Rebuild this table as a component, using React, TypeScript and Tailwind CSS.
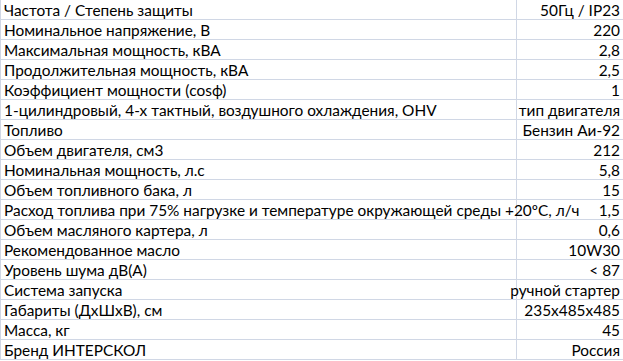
const rows: [string, string][] = [
  ["Частота / Степень защиты", "50Гц / IP23"],
  ["Номинальное напряжение, В", "220"],
  ["Максимальная мощность, кВА", "2,8"],
  ["Продолжительная мощность, кВА", "2,5"],
  ["Коэффициент мощности (cosф)", "1"],
  ["1-цилиндровый, 4-х тактный, воздушного охлаждения, OHV", "тип двигателя"],
  ["Топливо", "Бензин Аи-92"],
  ["Объем двигателя, см3", "212"],
  ["Номинальная мощность, л.с", "5,8"],
  ["Объем топливного бака, л", "15"],
  ["Расход топлива при 75% нагрузке и температуре окружающей среды +20ºС, л/ч", "1,5"],
  ["Объем масляного картера, л", "0,6"],
  ["Рекомендованное масло", "10W30"],
  ["Уровень шума дВ(А)", "< 87"],
  ["Система запуска", "ручной стартер"],
  ["Габариты (ДхШхВ), см", "235x485x485"],
  ["Масса, кг", "45"],
  ["Бренд ИНТЕРСКОЛ", "Россия"],
];

export default function App() {
  return (
    <div className="w-[623px] h-[361px] bg-white overflow-hidden text-black text-[15.4px] leading-none font-['Lato',sans-serif]">
      <div className="grid grid-cols-[517px_minmax(0,1fr)]">
        {rows.map(([label, value]) => (
          <div key={label} className="contents">
            <div className="h-5 border-l border-r border-b border-[#d0d7e5] flex items-end pl-[3px] pb-[1px] whitespace-nowrap">
              {label}
            </div>
            <div className="h-5 min-w-0 border-b border-[#d0d7e5] flex items-end justify-end pr-[3px] pb-[1px] whitespace-nowrap">
              {value}
            </div>
          </div>
        ))}
      </div>
    </div>
  );
}
